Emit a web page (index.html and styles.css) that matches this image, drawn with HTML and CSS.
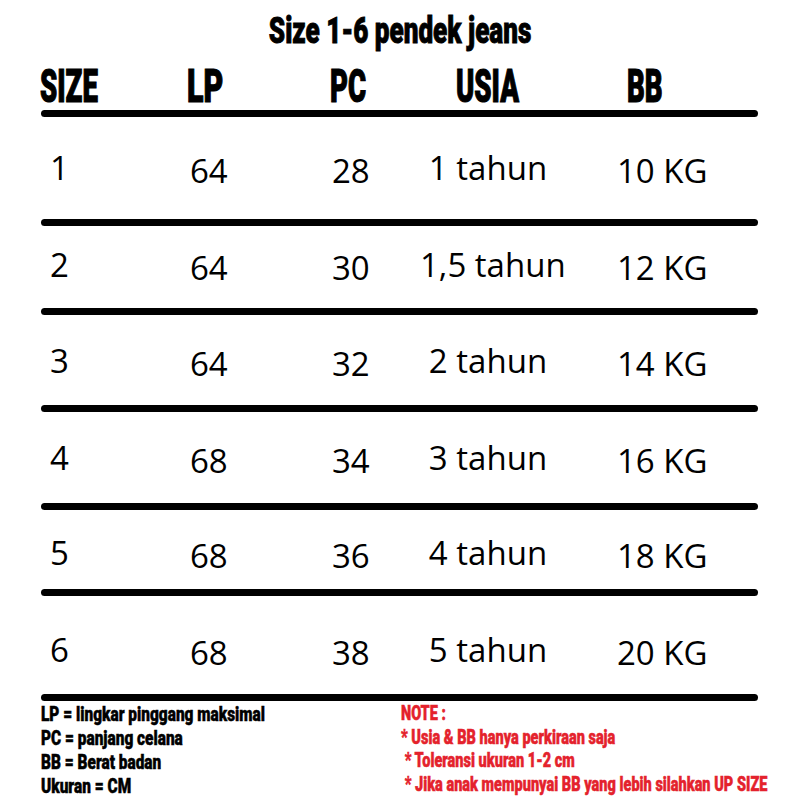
FILE: index.html
```html
<!DOCTYPE html>
<html lang="id">
<head>
<meta charset="utf-8">
<title>Size 1-6 pendek jeans</title>
<link rel="stylesheet" href="styles.css">
</head>
<body>
<main class="sheet">
  <h1 class="title"><span>Size 1-6 pendek jeans</span></h1>

  <div class="grid head">
    <div class="h c1"><span>SIZE</span></div>
    <div class="h c2"><span>LP</span></div>
    <div class="h c3"><span>PC</span></div>
    <div class="h c4"><span>USIA</span></div>
    <div class="h c5"><span>BB</span></div>
  </div>
  <div class="rule"></div>

  <div class="grid row r1"><div class="d c1">1</div><div class="d c2">64</div><div class="d c3">28</div><div class="d c4">1 tahun</div><div class="d c5">10 KG</div></div>
  <div class="rule"></div>
  <div class="grid row r2"><div class="d c1">2</div><div class="d c2">64</div><div class="d c3">30</div><div class="d c4">1,5 tahun</div><div class="d c5">12 KG</div></div>
  <div class="rule"></div>
  <div class="grid row r3"><div class="d c1">3</div><div class="d c2">64</div><div class="d c3">32</div><div class="d c4">2 tahun</div><div class="d c5">14 KG</div></div>
  <div class="rule"></div>
  <div class="grid row r4"><div class="d c1">4</div><div class="d c2">68</div><div class="d c3">34</div><div class="d c4">3 tahun</div><div class="d c5">16 KG</div></div>
  <div class="rule"></div>
  <div class="grid row r5"><div class="d c1">5</div><div class="d c2">68</div><div class="d c3">36</div><div class="d c4">4 tahun</div><div class="d c5">18 KG</div></div>
  <div class="rule"></div>
  <div class="grid row r6"><div class="d c1">6</div><div class="d c2">68</div><div class="d c3">38</div><div class="d c4">5 tahun</div><div class="d c5">20 KG</div></div>
  <div class="rule"></div>

  <div class="notes">
    <ul class="legend">
      <li>LP = lingkar pinggang maksimal</li>
      <li>PC = panjang celana</li>
      <li>BB = Berat badan</li>
      <li>Ukuran = CM</li>
    </ul>
    <ul class="note">
      <li>NOTE :</li>
      <li>* Usia &amp; BB hanya perkiraan saja</li>
      <li class="indent">* Toleransi ukuran 1-2 cm</li>
      <li class="indent">* Jika anak mempunyai BB yang lebih silahkan UP SIZE</li>
    </ul>
  </div>
</main>
</body>
</html>
```

FILE: styles.css
```css
html, body {
  margin: 0;
  background: #ffffff;
}

.sheet {
  width: 800px;
  height: 800px;
  box-sizing: border-box;
  padding-top: 13px;
  overflow: hidden;
  color: #000000;
}

.title {
  margin: 0;
  text-align: center;
  font: 900 36px/36px Roboto, "Liberation Sans", sans-serif;
  white-space: nowrap;
  -webkit-text-stroke: 0.9px #000000;
}

.title span {
  display: inline-block;
  transform: scaleX(0.725);
}

.grid {
  display: grid;
  grid-template-columns: 147px 143px 90px 136px 1fr;
  margin-left: 40px;
  width: 720px;
}

.head {
  margin-top: 15px;
  height: 46px;
  font: 900 46px/45px Roboto, "Liberation Sans", sans-serif;
  white-space: nowrap;
  -webkit-text-stroke: 1.2px #000000;
}

.head span {
  display: inline-block;
  transform: scaleX(0.6);
  transform-origin: left center;
}

.head .c2 span {
  transform: scaleX(0.66);
}

.head .c4 {
  text-align: center;
}

.head .c4 span {
  transform-origin: center center;
}

.head .c5 {
  padding-left: 71px;
}

.rule {
  height: 7px;
  margin-left: 41px;
  width: 717px;
  background: #000000;
  border-radius: 4px;
}

.row {
  box-sizing: border-box;
  font: 400 33px/40px "Open Sans", "DejaVu Sans", sans-serif;
  white-space: nowrap;
}

.r1 { height: 101.5px; padding-top: 31px; }
.r2 { height: 82.5px;  padding-top: 19px; }
.r3 { height: 90px;    padding-top: 26px; }
.r4 { height: 91px;    padding-top: 26px; }
.r5 { height: 79px;    padding-top: 23px; }
.r6 { height: 98px;    padding-top: 34px; }

.d {
  padding-top: 3px;
}

.row .c1 {
  padding-top: 0;
  padding-left: 10px;
}

.row .c2 {
  padding-left: 3px;
}

.row .c3 {
  padding-left: 2px;
}

.row .c4 {
  padding-top: 0;
  text-align: center;
}

.row .c5 {
  padding-left: 61px;
}

.notes {
  display: flex;
  margin-top: 1px;
  margin-left: 41px;
  font-family: Roboto, "Liberation Sans", sans-serif;
  font-weight: 900;
  white-space: nowrap;
}

.notes ul {
  margin: 0;
  padding: 0;
  list-style: none;
}

.notes li {
  transform-origin: left center;
}

.legend {
  flex: none;
  width: 360px;
  font-size: 20px;
  line-height: 24px;
  -webkit-text-stroke: 0.5px #000000;
}

.legend li {
  transform: scaleX(0.77);
}

.note {
  flex: none;
  padding-top: 4px;
  color: #e4222c;
  font-size: 20px;
  line-height: 23.5px;
  -webkit-text-stroke: 0.5px #e4222c;
}

.note li {
  transform: scaleX(0.726);
}

.note .indent {
  padding-left: 5px;
}
```
